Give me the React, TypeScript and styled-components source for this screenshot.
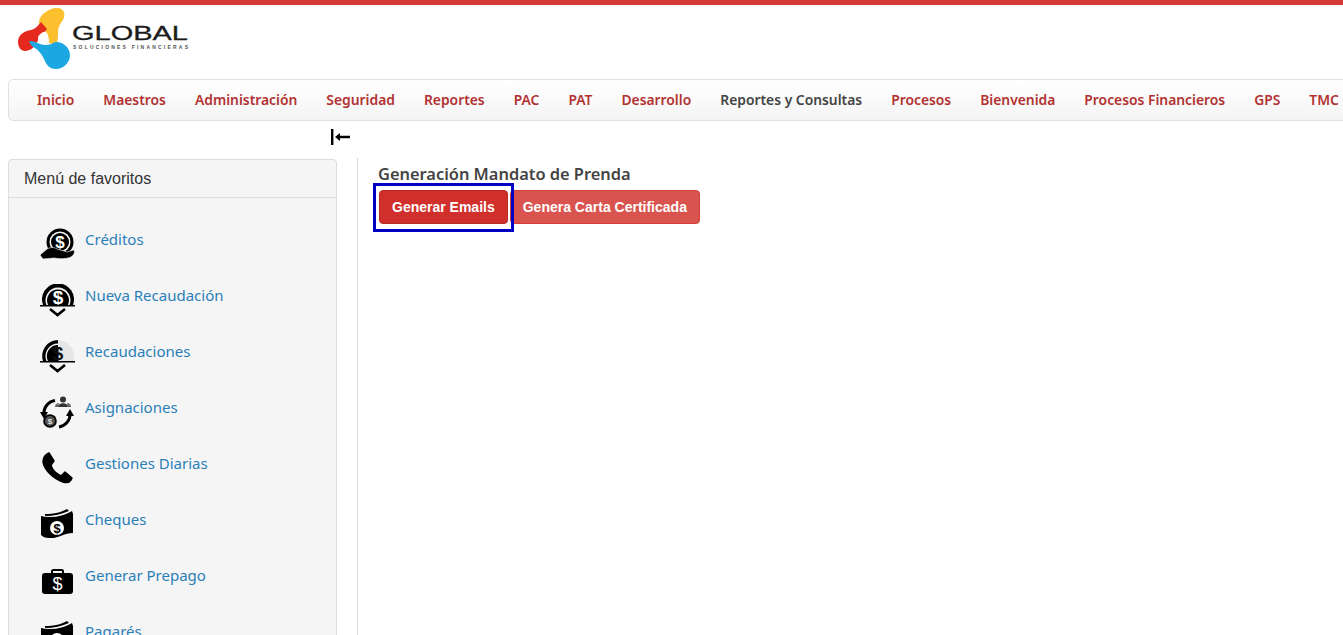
import styled, { createGlobalStyle } from 'styled-components';
import type { ReactNode } from 'react';

const GlobalStyle = createGlobalStyle`
    html, body {
        margin: 0;
        height: 635px;
        overflow: hidden;
        background: #fff;
        font-family: "Noto Sans", "Open Sans", sans-serif;
    }
`;

const Page = styled.div`
    width: 1343px;
    height: 635px;
    overflow: hidden;
    border-top: 5px solid #d33a33;
    box-sizing: border-box;
`;

const Header = styled.header`
    height: 74px;
    padding: 3px 0 0 16px;
    box-sizing: border-box;
`;

const NavBar = styled.nav`
    display: flex;
    align-items: center;
    gap: 29px;
    width: 1350px;
    height: 42px;
    margin-left: 8px;
    padding: 0 0 2px 28px;
    box-sizing: border-box;
    border: 1px solid #e0e0e0;
    border-radius: 5px;
    background: linear-gradient(to bottom, #ffffff, #f4f4f4);
`;

const NavItem = styled.a<{ $active?: boolean }>`
    font-size: 13.85px;
    font-weight: 600;
    white-space: nowrap;
    color: ${(p) => (p.$active ? '#444444' : '#b23232')};
`;

const ToggleRow = styled.div`
    display: flex;
    justify-content: flex-end;
    width: 350px;
    height: 38px;
    padding-top: 8px;
    box-sizing: border-box;
    line-height: 0;
`;

const Body = styled.div`
    display: flex;
    align-items: flex-start;
`;

const Panel = styled.aside`
    width: 329px;
    height: 600px;
    margin-left: 8px;
    box-sizing: border-box;
    border: 1px solid #dddddd;
    border-radius: 4px;
    background: #f5f5f5;
`;

const PanelHeading = styled.div`
    height: 37px;
    padding-left: 15px;
    display: flex;
    align-items: center;
    font-family: "Liberation Sans", Arial, sans-serif;
    font-size: 16px;
    color: #333333;
    border-bottom: 1px solid #dddddd;
`;

const FavList = styled.ul`
    list-style: none;
    margin: 0;
    padding: 30px 0 0 31px;
`;

const FavItem = styled.li`
    display: flex;
    align-items: flex-start;
    height: 56px;
    gap: 9px;
`;

const IconBox = styled.span`
    display: block;
    width: 36px;
    height: 36px;
    flex: none;
`;

const FavLink = styled.a`
    font-size: 15px;
    line-height: 20px;
    margin-top: 1px;
    color: #2a7fb8;
`;

const Content = styled.main`
    margin-left: 20px;
    margin-top: -1px;
    height: 600px;
    padding: 6px 0 0 20px;
    border-left: 1px solid #dddddd;
`;

const Title = styled.h4`
    margin: 0;
    font-size: 16.4px;
    line-height: 20px;
    font-weight: 600;
    color: #444444;
`;

const ButtonRow = styled.div`
    display: flex;
    gap: 2px;
    margin-top: 6px;
    margin-left: 1px;
`;

const Button = styled.button<{ $focused?: boolean }>`
    position: relative;
    height: 34px;
    padding: 0 12px;
    border: 1px solid ${(p) => (p.$focused ? '#b52b27' : '#d43f3a')};
    border-radius: 4px;
    background: ${(p) => (p.$focused ? '#d02f2b' : '#d9534f')};
    color: #ffffff;
    font-family: "Liberation Sans", Arial, sans-serif;
    font-size: 14px;
    font-weight: 700;
    outline: none;
`;

// the square blue box drawn round the button in the screenshot
const FocusBox = styled.span`
    position: absolute;
    top: -8px;
    left: -7px;
    right: -7px;
    bottom: -9px;
    z-index: 1;
    border: 3px solid #0000c4;
    pointer-events: none;
`;

const Logo = () => (
    <svg width="176" height="68" viewBox="16 8 176 68">
        <path
            fill="#fcc02e"
            d="M39 23 C39 14 50 8 57 8 C64 8 66 14 63 20 C60 24 58 27 58 32 C58 37 58 41 56 45 L49 43 L45 30 L41 27 Z"
        />
        <path
            fill="#e5291f"
            d="M18 42 C18 35 24 31 31 30 C35 29 38 26 41 22 L47 29 L37 42 C35 47 30 51 25 51 C21 51 18 47 18 42 Z"
        />
        <path
            fill="#1ba7e2"
            d="M29 41 C33 41 36 42 40 44 C45 46 51 45 55 42 C62 41 70 47 70 55 C70 63 63 69 56 69 C49 69 46 64 44 59 C42 54 38 50 35 48 C32 47 30 44 29 41 Z"
        />
        <path fill="#ffffff" d="M38 37 C40 33 44 31 46 32 C48 34 49 38 49 42 C46 43 42 42 38 41 Z" />
        <text
            x="72"
            y="40"
            fontFamily="Liberation Sans, Arial, sans-serif"
            fontSize="21"
            textLength="116"
            lengthAdjust="spacingAndGlyphs"
            fill="#1c1c1c"
            stroke="#1c1c1c"
            strokeWidth="0.3"
        >
            GLOBAL
        </text>
        <text
            x="73"
            y="49"
            fontFamily="Liberation Sans, Arial, sans-serif"
            fontSize="5"
            fontWeight="700"
            textLength="115"
            fill="#555555"
        >
            SOLUCIONES FINANCIERAS
        </text>
    </svg>
);

const CreditsIcon = () => (
    <svg viewBox="0 0 36 36" width="36" height="36">
        <circle cx="20" cy="14" r="13.500" fill="#000" />
        <circle cx="20" cy="14" r="10.500" fill="#f5f5f5" />
        <circle cx="20" cy="14" r="9" fill="#000" />
        <text x="20" y="20" textAnchor="middle" fill="#fff" fontFamily="Liberation Sans, Arial, sans-serif" fontWeight="700" fontSize="17">$</text>
        <path d="M0 27 L7 21 C11 19 14 19 17 21 L24 23 L27 24 L34 22 C35 24 34 27 31 29 C27 31 20 31 14 30 L3 31 Z" fill="#000" stroke="#f5f5f5" strokeWidth="0.6" />
    </svg>
);

const NewCollectionIcon = () => (
    <svg viewBox="0 0 36 36" width="36" height="36">
        <path d="M3 21 A16 16 0 1 1 33 21 Z" fill="#000" />
        <path d="M6.500 21 A12.500 12.500 0 1 1 29.500 21 Z" fill="#f5f5f5" />
        <path d="M8 21 A11 11 0 1 1 28 21 Z" fill="#000" />
        <text x="18" y="20" textAnchor="middle" fill="#fff" fontFamily="Liberation Sans, Arial, sans-serif" fontWeight="700" fontSize="19">$</text>
        <rect x="0" y="21" width="35" height="1.500" fill="#000" />
        <path d="M10 25 L17.500 31 L25 25" fill="none" stroke="#000" strokeWidth="2.600" />
    </svg>
);

const CollectionsIcon = () => (
    <svg viewBox="0 0 36 36" width="36" height="36">
        <path d="M18 0 A16 16 0 0 1 33 21 L18 21 Z" fill="#e6e6e6" />
        <path d="M18 0 A16 16 0 0 0 3 21 L18 21 Z" fill="#000" />
        <path d="M6.500 21 A12.500 12.500 0 0 1 18 3.500 L18 5 A11 11 0 0 0 8 21 Z" fill="#f5f5f5" />
        <text x="18" y="20" textAnchor="middle" fill="#111" fontFamily="Liberation Sans, Arial, sans-serif" fontWeight="700" fontSize="19">$</text>
        <rect x="0" y="21" width="35" height="1.500" fill="#000" />
        <path d="M10 25 L17.500 31 L25 25" fill="none" stroke="#000" strokeWidth="2.600" />
    </svg>
);

const AssignIcon = () => (
    <svg viewBox="0 0 36 36" width="36" height="36">
        <path d="M4 19 A13 13 0 0 1 15 4.500" fill="none" stroke="#000" strokeWidth="3" />
        <path d="M0 16 L8 16 L4 23 Z" fill="#000" />
        <path d="M30 17 A13 13 0 0 1 19 31" fill="none" stroke="#000" strokeWidth="3" />
        <path d="M26 20 L34 20 L30 13 Z" fill="#000" />
        <circle cx="23" cy="3.500" r="3" fill="#333" />
        <path d="M18 11 C18 6 28 6 28 11 Z" fill="#333" />
        <path d="M15 11 C15 8 17 7 19 7 L18 11 Z M27 7 C29 7 31 8 31 11 L28 11 Z" fill="#666" />
        <circle cx="10" cy="25" r="6.800" fill="#000" />
        <circle cx="10" cy="25" r="5" fill="#555" />
        <text x="10" y="28" textAnchor="middle" fill="#fff" fontFamily="Liberation Sans, Arial, sans-serif" fontSize="8">$</text>
    </svg>
);

const PhoneIcon = () => (
    <svg viewBox="0 0 36 36" width="36" height="36">
        <path d="M7 2 L9 1 L14 9 L11 13 C12 18 17 22 21 24 L25 20 L32 26 L31 28 C29 31 26 31 23 30 C14 27 5 19 3 10 C3 7 4 4 7 2 Z" fill="#000" stroke="#000" strokeLinejoin="round" strokeWidth="1.500" />
    </svg>
);

const ChequesIcon = () => (
    <svg viewBox="0 0 36 36" width="36" height="36">
        <path d="M5 6 C14 6 22 4 27 1 L29 3 C22 6 14 8 5 8 Z" fill="#000" />
        <path d="M1 8 C12 10 24 8 32 3 L33 6 L33 25 C24 25 18 31 9 30 C5 30 3 29 1 27 Z" fill="#000" />
        <path d="M3 8 C14 10 24 7 31 2.500" fill="none" stroke="#f5f5f5" strokeWidth="0.8" />
        <circle cx="17" cy="20" r="7" fill="#fff" />
        <text x="17" y="24.500" textAnchor="middle" fill="#000" fontFamily="Liberation Sans, Arial, sans-serif" fontWeight="700" fontSize="13">$</text>
    </svg>
);

const CaseIcon = () => (
    <svg viewBox="0 0 36 36" width="36" height="36">
        <path d="M11 10 L11 7 C11 6 12 5 13 5 L22 5 C23 5 24 6 24 7 L24 10 L22 10 L22 7 L13 7 L13 10 Z" fill="#000" />
        <rect x="2" y="9" width="31" height="21" rx="3" fill="#000" />
        <text x="17.500" y="26" textAnchor="middle" fill="#fff" fontFamily="Liberation Sans, Arial, sans-serif" fontSize="18">$</text>
    </svg>
);

const favorites: { label: string; icon: ReactNode }[] = [
    { label: 'Créditos', icon: <CreditsIcon /> },
    { label: 'Nueva Recaudación', icon: <NewCollectionIcon /> },
    { label: 'Recaudaciones', icon: <CollectionsIcon /> },
    { label: 'Asignaciones', icon: <AssignIcon /> },
    { label: 'Gestiones Diarias', icon: <PhoneIcon /> },
    { label: 'Cheques', icon: <ChequesIcon /> },
    { label: 'Generar Prepago', icon: <CaseIcon /> },
    { label: 'Pagarés', icon: <ChequesIcon /> },
];

const menu = [
    'Inicio',
    'Maestros',
    'Administración',
    'Seguridad',
    'Reportes',
    'PAC',
    'PAT',
    'Desarrollo',
    'Reportes y Consultas',
    'Procesos',
    'Bienvenida',
    'Procesos Financieros',
    'GPS',
    'TMC',
];

const App = () => (
    <>
        <GlobalStyle />
        <Page>
            <Header>
                <Logo />
            </Header>
            <NavBar>
                {menu.map((item) => (
                    <NavItem key={item} $active={item === 'Reportes y Consultas'}>
                        {item}
                    </NavItem>
                ))}
            </NavBar>
            <ToggleRow>
                <svg width="19" height="16" viewBox="0 0 19 16">
                    <rect x="0" y="0" width="2.400" height="16" fill="#000" />
                    <path d="M4 8 L9 4 L9 6.800 L19 6.800 L19 9.200 L9 9.200 L9 12 Z" fill="#000" />
                </svg>
            </ToggleRow>
            <Body>
                <Panel>
                    <PanelHeading>Menú de favoritos</PanelHeading>
                    <FavList>
                        {favorites.map((fav) => (
                            <FavItem key={fav.label}>
                                <IconBox>{fav.icon}</IconBox>
                                <FavLink>{fav.label}</FavLink>
                            </FavItem>
                        ))}
                    </FavList>
                </Panel>
                <Content>
                    <Title>Generación Mandato de Prenda</Title>
                    <ButtonRow>
                        <Button $focused>
                            Generar Emails
                            <FocusBox />
                        </Button>
                        <Button>Genera Carta Certificada</Button>
                    </ButtonRow>
                </Content>
            </Body>
        </Page>
    </>
);

export default App;
